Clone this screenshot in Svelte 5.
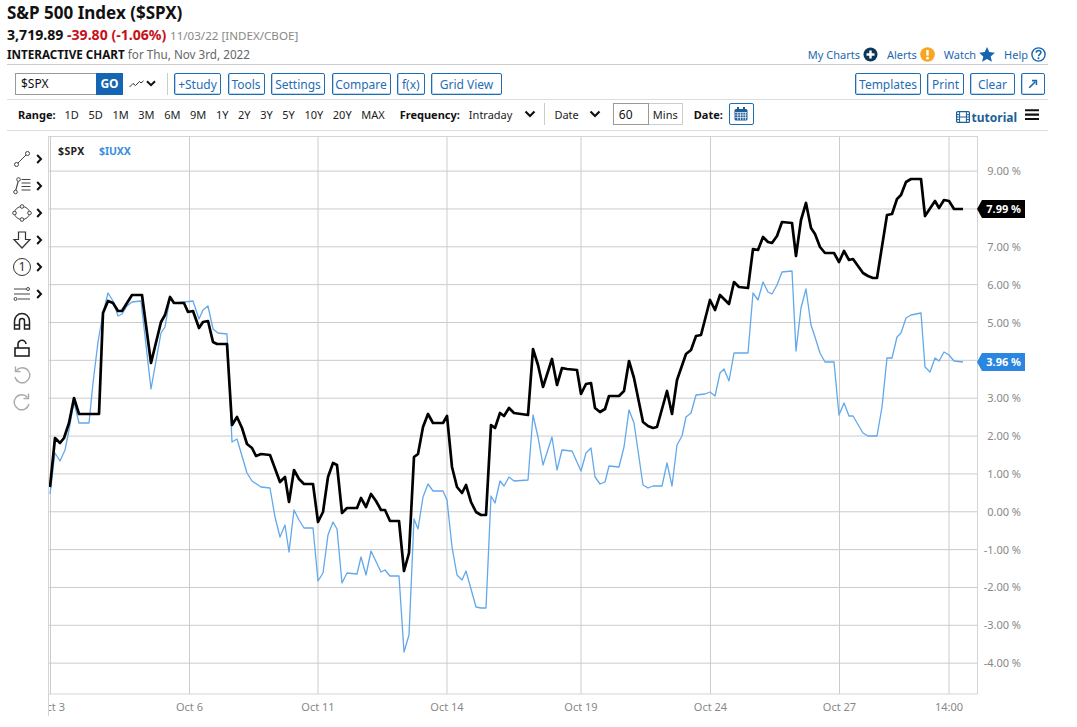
<script>
  const spx = "50,487 55,438 60,443 64,438 69,423 74,398 79,414 99,414 103,313 108,301 113,303 118,311 122,311 127,303 132,295 142,295 151,363 161,322 165,315 170,297 174,303 184,303 188,312 193,311 199,328 203,322 208,321 213,342 217,344 227,344 232,425 237,417 242,428 247,444 252,448 256,456 261,454 270,455 280,482 285,477 289,502 294,470 299,479 304,484 313,484 318,522 323,512 328,477 333,463 337,465 342,513 347,508 357,508 361,498 366,507 371,494 376,501 381,510 385,510 390,521 399,521 404,571 409,553 414,457 418,454 423,427 428,414 433,423 443,423 447,416 452,467 457,487 462,493 466,485 471,502 476,512 481,515 486,515 491,425 495,428 500,413 504,416 509,408 514,413 528,415 533,349 538,365 543,387 552,359 557,385 562,368 567,369 577,370 581,394 586,384 591,383 595,408 600,412 605,409 609,396 619,396 624,391 629,361 634,378 643,422 648,426 653,428 657,427 667,391 672,414 677,380 686,354 691,350 696,336 701,335 710,300 715,310 720,295 729,304 734,282 739,287 748,288 753,249 758,250 763,237 768,242 772,243 777,236 782,222 792,223 796,256 801,220 806,203 811,228 815,234 820,247 825,253 834,253 839,262 844,251 849,260 853,259 863,273 868,276 873,278 877,278 887,215 892,214 897,199 901,195 906,182 911,179 921,179 925,216 935,201 939,208 944,200 949,201 954,209 963,209";
  const iuxx = "50,494 55,453 60,461 65,450 69,430 74,402 79,423 89,423 93,383 98,342 103,313 108,293 113,301 118,316 122,314 127,306 132,302 141,301 151,389 161,333 165,327 170,298 174,303 184,302 193,301 199,319 203,310 208,306 213,329 218,333 227,334 232,442 237,439 247,473 252,481 261,487 270,488 275,517 280,537 285,525 289,552 294,510 299,520 304,528 313,528 318,581 323,573 328,535 333,522 337,529 342,583 347,573 357,574 361,557 366,575 371,551 381,572 385,570 390,576 399,576 404,652 409,635 414,519 418,529 423,497 428,484 433,491 443,491 447,500 452,547 457,575 462,580 466,571 476,607 481,608 486,608 491,496 495,503 500,481 504,486 509,477 514,481 528,480 533,415 538,437 543,465 552,437 557,470 562,450 572,451 581,471 586,453 591,448 595,477 600,484 605,482 609,466 619,467 624,447 629,410 634,423 643,485 648,488 653,486 662,486 667,463 672,486 677,445 682,436 686,417 691,413 696,395 705,394 710,392 715,396 720,373 724,369 729,381 734,353 748,353 753,293 758,300 763,282 768,292 772,294 777,285 782,272 792,271 796,351 801,308 806,289 811,325 815,337 820,353 825,362 834,362 839,415 844,403 849,416 853,416 863,433 868,436 877,436 882,407 887,358 892,358 897,337 901,333 906,318 911,315 916,314 921,313 925,367 930,372 935,358 939,361 944,352 949,355 954,361 963,362";

  const percents = [9, 8, 7, 6, 5, 4, 3, 2, 1, 0, -1, -2, -3, -4];
  const yFor = (p) => 322.5 + (5 - p) * 37.85;
  const xTicks = [
    { x: 50.5, tx: 51.5, label: "Oct 3" },
    { x: 189.5, tx: 189.5, label: "Oct 6" },
    { x: 318, tx: 318, label: "Oct 11" },
    { x: 447, tx: 447, label: "Oct 14" },
    { x: 581, tx: 581, label: "Oct 19" },
    { x: 710.5, tx: 710.5, label: "Oct 24" },
    { x: 839.5, tx: 839.5, label: "Oct 27" },
    { x: 949, tx: 949, label: "14:00" }
  ];
  const ranges = ["1D", "5D", "1M", "3M", "6M", "9M", "1Y", "2Y", "3Y", "5Y", "10Y", "20Y", "MAX"];
  const leftButtons = [
    { t: "+Study", w: 47 },
    { t: "Tools", w: 37 },
    { t: "Settings", w: 54 },
    { t: "Compare", w: 59 },
    { t: "f(x)", w: 27.5 },
    { t: "Grid View", w: 71 }
  ];
  const rightButtons = [
    { t: "Templates", w: 66 },
    { t: "Print", w: 37 },
    { t: "Clear", w: 45 }
  ];
</script>

<div class="page">
  <header class="head">
    <div class="titles">
      <h1>S&amp;P 500 Index ($SPX)</h1>
      <div class="quote"><b>3,719.89</b> <b class="red">-39.80 (-1.06%)</b> <span class="gray">11/03/22 [INDEX/CBOE]</span></div>
      <div class="sub"><b>INTERACTIVE CHART</b> <span class="for">for Thu, Nov 3rd, 2022</span></div>
    </div>
    <nav class="links">
      <span class="lnk">My Charts
        <svg width="15" height="15" viewBox="0 0 15 15"><circle cx="7.5" cy="7.5" r="7" fill="#0d3658"/><path d="M7.5 3.5v8M3.5 7.5h8" stroke="#fff" stroke-width="2.4"/></svg>
      </span>
      <span class="lnk">Alerts
        <svg width="15" height="15" viewBox="0 0 15 15"><circle cx="7.5" cy="7.5" r="7.3" fill="#f6a623"/><path d="M7.5 3v5.6" stroke="#fff" stroke-width="2.4"/><circle cx="7.5" cy="11.2" r="1.4" fill="#fff"/></svg>
      </span>
      <span class="lnk">Watch
        <svg width="16" height="15" viewBox="0 0 16 15"><path d="M8 0l2.3 5.1 5.5.6-4.1 3.7 1.2 5.4L8 12l-4.9 2.8 1.2-5.4L.2 5.7l5.5-.6z" fill="#1464b0"/></svg>
      </span>
      <span class="lnk">Help
        <svg width="15" height="15" viewBox="0 0 15 15"><circle cx="7.5" cy="7.5" r="6.6" fill="none" stroke="#1464b0" stroke-width="1.4"/><path d="M5.2 5.8c0-1.5 1.1-2.3 2.4-2.3s2.3.8 2.3 2c0 1.9-2.4 1.8-2.4 3.7" fill="none" stroke="#1464b0" stroke-width="1.5"/><circle cx="7.5" cy="11.3" r="1" fill="#1464b0"/></svg>
      </span>
    </nav>
  </header>

  <div class="toolbar">
    <div class="sym"><span class="symtext">$SPX</span><span class="go">GO</span></div>
    <div class="charttype">
      <svg width="15" height="8" viewBox="0 0 15 8"><path d="M.5 7L4 3.5 6.5 5.5 10.5 1.5 12 3 14.5.8" fill="none" stroke="#333" stroke-width="1"/></svg>
      <svg class="chev" width="10" height="7" viewBox="0 0 10 7"><path d="M1 1.2l4 4 4-4" fill="none" stroke="#111" stroke-width="2"/></svg>
    </div>
    <div class="vsep"></div>
    <div class="btns">
      {#each leftButtons as b}
        <span class="btn" style:width="{b.w}px">{b.t}</span>
      {/each}
    </div>
    <div class="btns right">
      {#each rightButtons as b}
        <span class="btn" style:width="{b.w}px">{b.t}</span>
      {/each}
      <span class="btn icon">
        <svg width="10" height="10" viewBox="0 0 10 10"><path d="M1.2 8.8L7 3M4 1.6h4.4V6" fill="none" stroke="#1a68b0" stroke-width="1.6"/></svg>
      </span>
    </div>
  </div>

  <div class="rangebar">
    <b class="rlabel">Range:</b>
    <div class="ranges">
      {#each ranges as r}<span>{r}</span>{/each}
    </div>
    <b class="flabel">Frequency:</b>
    <span class="intraday">Intraday</span>
    <svg class="chev c1" width="12" height="8" viewBox="0 0 12 8"><path d="M1.5 1.500l4.500 4.500 4.500-4.500" fill="none" stroke="#111" stroke-width="2.200"/></svg>
    <div class="vsep short"></div>
    <span class="datesel">Date</span>
    <svg class="chev c2" width="12" height="8" viewBox="0 0 12 8"><path d="M1.5 1.500l4.500 4.500 4.500-4.500" fill="none" stroke="#111" stroke-width="2.200"/></svg>
    <div class="mins"><span class="num">60</span><span class="unit">Mins</span></div>
    <b class="dlabel">Date:</b>
    <span class="cal">
      <svg width="14" height="14" viewBox="0 0 14 14"><rect x=".5" y="2" width="13" height="11.5" rx="1.5" fill="#1c5f99"/><rect x="3" y="0" width="2" height="3.5" fill="#1c5f99"/><rect x="9" y="0" width="2" height="3.5" fill="#1c5f99"/><path d="M1 5.6h12M1 8h12M1 10.6h12M3.8 5v8M6.4 5v8M9 5v8M11.4 5v8" stroke="#fff" stroke-width=".7"/></svg>
    </span>
    <div class="tut">
      <svg width="14" height="12" viewBox="0 0 14 12"><rect x=".6" y=".6" width="12.8" height="10.8" rx="1" fill="none" stroke="#1c5f99" stroke-width="1.2"/><path d="M3.6 .6v10.8M10.4 .6v10.8M.6 3.6h3M.6 6h3M.6 8.6h3M10.4 3.6h3M10.4 6h3M10.4 8.6h3M3.6 6h6.8" stroke="#1c5f99" stroke-width="1"/></svg>
      <b>tutorial</b>
    </div>
    <svg class="burger" width="14" height="12" viewBox="0 0 14 12"><path d="M0 1.2h14M0 5.6h14M0 10h14" stroke="#111" stroke-width="2.1"/></svg>
  </div>

  <div class="main">
    <aside class="tools">
      <div class="tool">
        <svg width="20" height="20" viewBox="0 0 20 20" fill="none" stroke="#444" stroke-width="1"><circle cx="4.5" cy="15.5" r="2"/><circle cx="15.5" cy="4.5" r="2"/><path d="M6 14L14 6"/></svg>
        <svg class="tc" width="7" height="10" viewBox="0 0 7 10"><path d="M1.2 1l3.8 4-3.8 4" fill="none" stroke="#111" stroke-width="2"/></svg>
      </div>
      <div class="tool">
        <svg width="20" height="20" viewBox="0 0 20 20" fill="none" stroke="#444" stroke-width="1"><circle cx="3.5" cy="16" r="1.8"/><circle cx="6.5" cy="3.5" r="1.8"/><path d="M3.8 14.2L6.2 5.3M9.5 3.5h9M9.5 7h9M9.5 10.5h9M9.5 14h9" stroke-width="1.2"/></svg>
        <svg class="tc" width="7" height="10" viewBox="0 0 7 10"><path d="M1.2 1l3.8 4-3.8 4" fill="none" stroke="#111" stroke-width="2"/></svg>
      </div>
      <div class="tool">
        <svg width="20" height="20" viewBox="0 0 20 20" fill="none" stroke="#444" stroke-width="1"><ellipse cx="10" cy="10" rx="7.5" ry="6.5"/><circle cx="10" cy="3.5" r="1.8" fill="#fff"/><circle cx="10" cy="16.5" r="1.8" fill="#fff"/><circle cx="2.5" cy="10" r="1.8" fill="#fff"/><circle cx="17.5" cy="10" r="1.8" fill="#fff"/></svg>
        <svg class="tc" width="7" height="10" viewBox="0 0 7 10"><path d="M1.2 1l3.8 4-3.8 4" fill="none" stroke="#111" stroke-width="2"/></svg>
      </div>
      <div class="tool">
        <svg width="20" height="20" viewBox="0 0 20 20" fill="none" stroke="#333" stroke-width="1.2"><path d="M6.5 2h7v7.500h4.500L10 18 2 9.500h4.500z"/></svg>
        <svg class="tc" width="7" height="10" viewBox="0 0 7 10"><path d="M1.2 1l3.8 4-3.8 4" fill="none" stroke="#111" stroke-width="2"/></svg>
      </div>
      <div class="tool">
        <span class="numcircle">1</span>
        <svg class="tc" width="7" height="10" viewBox="0 0 7 10"><path d="M1.2 1l3.800 4-3.800 4" fill="none" stroke="#111" stroke-width="2"/></svg>
      </div>
      <div class="tool">
        <svg width="20" height="20" viewBox="0 0 20 20" fill="none" stroke="#444" stroke-width="1"><path d="M2 5h12M2 10h16M6 15h12"/><circle cx="16" cy="5" r="1.500" fill="#fff"/><circle cx="3.500" cy="15" r="1.500" fill="#fff"/></svg>
        <svg class="tc" width="7" height="10" viewBox="0 0 7 10"><path d="M1.2 1l3.800 4-3.800 4" fill="none" stroke="#111" stroke-width="2"/></svg>
      </div>
      <div class="tool">
        <svg width="20" height="20" viewBox="0 0 20 20" fill="none" stroke="#222" stroke-width="1.500"><path d="M2.500 18V10a7.500 7.500 0 0 1 15 0v8h-5V10a2.500 2.500 0 0 0-5 0v8zM2.500 14h5M12.500 14h5"/></svg>
      </div>
      <div class="tool">
        <svg width="20" height="20" viewBox="0 0 20 20" fill="none" stroke="#222" stroke-width="1.600"><rect x="3" y="10" width="14" height="8"/><path d="M6 10V6.500a4 4 0 0 1 8-.500"/></svg>
      </div>
      <div class="tool">
        <svg width="20" height="20" viewBox="0 0 20 20" fill="none" stroke="#aaa" stroke-width="1.400"><path d="M4.500 5.500A7.500 7.500 0 1 1 3 12"/><path d="M3.500 1.500v5h5"/></svg>
      </div>
      <div class="tool">
        <svg width="20" height="20" viewBox="0 0 20 20" fill="none" stroke="#aaa" stroke-width="1.400"><path d="M15.500 5.500A7.500 7.500 0 1 0 17 12"/><path d="M16.500 1.500v5h-5"/></svg>
      </div>
    </aside>

    <svg class="chart" width="990" height="591" viewBox="48 136 990 591">
      <defs>
        <clipPath id="plot"><rect x="49" y="136" width="930" height="591"/></clipPath>
      </defs>
      {#each percents as p}
        <line x1="49" x2="977" y1={yFor(p)} y2={yFor(p)} class="grid"/>
        <text x="1021" y={yFor(p) + 4} class="ylab">{p.toFixed(2)} %</text>
      {/each}
      {#each xTicks as t}
        <line x1={t.x} x2={t.x} y1="136" y2="694" class="grid"/>
        <text x={t.tx} y="711" class="xlab" clip-path="url(#plot)">{t.label}</text>
      {/each}
      <line x1="48.500" x2="48.500" y1="136" y2="716" class="axis"/>
      <line x1="48" x2="977.500" y1="136.500" y2="136.500" class="axis"/>
      <line x1="977.500" x2="977.500" y1="136" y2="694" class="axis"/>
      <line x1="48" x2="977.500" y1="694" y2="694" class="axis"/>

      <text x="58" y="155" class="leg">$SPX</text>
      <text x="99" y="155" class="leg blue">$IUXX</text>

      <polyline points={iuxx} class="line-b" clip-path="url(#plot)"/>
      <polyline points={spx} class="line-k" clip-path="url(#plot)"/>

      <polygon points="977,209 982,200 1025,200 1025,218 982,218" fill="#000"/>
      <text x="1021" y="213" class="tag">7.99 %</text>
      <polygon points="977,362 982,353 1025,353 1025,371 982,371" fill="#2a86de"/>
      <text x="1021" y="366" class="tag">3.96 %</text>
    </svg>
  </div>
</div>

<style>
  :global(body) {
    margin: 0;
    background: #fff;
    font-family: "Noto Sans", sans-serif;
    color: #111;
  }
  .page {
    width: 1041px;
    height: 727px;
    padding-left: 7px;
    overflow: hidden;
  }
  .head {
    display: flex;
    justify-content: space-between;
    align-items: flex-end;
    height: 64px;
    border-bottom: 1px solid #ccc;
  }
  h1 {
    margin: 0;
    font-size: 17px;
    line-height: 27px;
    font-weight: 700;
    color: #111;
  }
  .quote {
    font-size: 14.100px;
    line-height: 18px;
  }
  .red { color: #c8101a; }
  .gray { color: #888; font-size: 11.600px; }
  .sub {
    font-size: 11.700px;
    line-height: 19px;
  }
  .for { color: #666; }
  .links {
    display: flex;
    font-size: 11px;
    color: #1a68b0;
    padding-right: 2px;
    gap: 9px;
    height: 20px;
    align-items: center;
  }
  .lnk {
    display: flex;
    align-items: center;
    gap: 3px;
  }
  .toolbar {
    box-sizing: border-box;
    display: flex;
    align-items: center;
    height: 35px;
    padding: 3px 3px 0 8px;
    border-bottom: 1px solid #ddd;
  }
  .sym {
    display: flex;
    height: 22px;
    width: 108px;
  }
  .symtext {
    box-sizing: border-box;
    flex: 1;
    border: 1px solid #999;
    border-right: 0;
    font-size: 12px;
    line-height: 20px;
    padding-left: 5px;
  }
  .go {
    width: 27px;
    background: #1565b2;
    color: #fff;
    font-size: 12px;
    font-weight: 700;
    line-height: 22px;
    text-align: center;
  }
  .charttype {
    display: flex;
    align-items: center;
    gap: 2px;
    margin-left: 6px;
  }
  .vsep {
    width: 1px;
    height: 22px;
    background: #ccc;
    margin-left: 11px;
    margin-right: 6px;
  }
  .btns {
    display: flex;
    gap: 6.500px;
  }
  .btns.right {
    margin-left: auto;
    gap: 6px;
  }
  .btn {
    box-sizing: border-box;
    height: 22px;
    padding-top: 2px;
    border: 1px solid #1f6db5;
    box-shadow: inset 1px -1px 0 #bcd4ea;
    border-radius: 2px;
    font-size: 12px;
    color: #1f6db5;
    display: flex;
    align-items: center;
    justify-content: center;
    white-space: nowrap;
  }
  .btn.icon { width: 24px; padding-top: 0; }
  .rangebar {
    box-sizing: border-box;
    display: flex;
    align-items: center;
    height: 31px;
    padding: 0 0 2px 11px;
    border-bottom: 1px solid #ddd;
    font-size: 11px;
  }
  .ranges {
    display: flex;
    gap: 9.600px;
    margin-left: 9px;
    color: #222;
  }
  .flabel { margin-left: 15px; }
  .intraday { margin-left: 9px; color: #222; }
  .c1 { margin-left: 12px; }
  .vsep.short { margin-left: 8px; margin-right: 9px; }
  .datesel { color: #222; }
  .c2 { margin-left: 10px; }
  .mins {
    display: flex;
    height: 22px;
    margin-left: 12px;
    font-size: 12px;
  }
  .num {
    box-sizing: border-box;
    width: 36px;
    border: 1px solid #999;
    line-height: 21px;
    padding-left: 5px;
  }
  .unit {
    box-sizing: border-box;
    width: 34px;
    border: 1px solid #ccc;
    border-left: 0;
    line-height: 21px;
    text-align: center;
    font-size: 11px;
    color: #222;
  }
  .dlabel { margin-left: 11px; }
  .cal {
    box-sizing: border-box;
    width: 25px;
    height: 22px;
    margin-left: 6px;
    border: 1px solid #1f6db5;
    border-radius: 2px;
    display: flex;
    align-items: center;
    justify-content: center;
  }
  .tut {
    margin-left: auto;
    display: flex;
    align-items: center;
    gap: 2px;
    color: #1c5f99;
    font-size: 12px;
    padding-top: 6px;
  }
  .burger {
    margin-left: 8px;
    margin-right: 9px;
    margin-top: 2px;
  }
  .main {
    display: flex;
    margin-left: -7px;
    margin-top: 5px;
  }
  .tools {
    width: 48px;
    flex: none;
    padding-top: 9px;
    box-sizing: border-box;
  }
  .tool {
    height: 27px;
    display: flex;
    align-items: center;
    padding-left: 12px;
    gap: 4px;
  }
  .numcircle {
    box-sizing: border-box;
    width: 18px;
    height: 18px;
    margin: 0 1px;
    border: 1.200px solid #333;
    border-radius: 50%;
    font-size: 12.500px;
    line-height: 15px;
    text-align: center;
    color: #333;
  }
  .chart {
    display: block;
    flex: none;
  }
  .grid {
    stroke: #ccc;
    stroke-width: 1;
  }
  .axis {
    stroke: #d4d4d4;
    stroke-width: 1;
  }
  .ylab {
    font-size: 11px;
    fill: #888;
    text-anchor: end;
  }
  .xlab {
    font-size: 11px;
    fill: #888;
    text-anchor: middle;
  }
  .leg {
    font-size: 10.500px;
    font-weight: 700;
    fill: #222;
    letter-spacing: .4px;
  }
  .leg.blue {
    fill: #3a8fe0;
    letter-spacing: -.1px;
  }
  .line-k {
    fill: none;
    stroke: #000;
    stroke-width: 2.700;
    stroke-linejoin: round;
  }
  .line-b {
    fill: none;
    stroke: #62a8ea;
    stroke-width: 1.300;
    stroke-linejoin: round;
  }
  .tag {
    font-size: 11px;
    font-weight: 700;
    fill: #fff;
    text-anchor: end;
  }
</style>
